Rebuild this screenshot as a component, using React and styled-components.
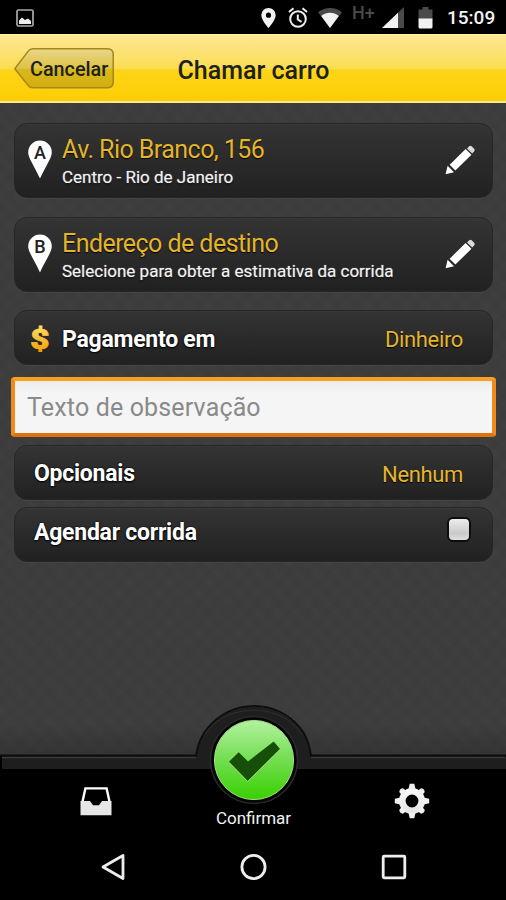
import styled, { createGlobalStyle } from "styled-components";

export default function App() {
  return (
    <Screen>
      <GlobalStyle />
      <StatusBar />
      <Header>
        <BackButton>
          <BackShape />
          <span>Cancelar</span>
        </BackButton>
        <Title>Chamar carro</Title>
      </Header>

      <Content>
        {addresses.map(({ letter, title, text, gap }) => (
          <Card key={letter} $tall $gap={gap}>
            <Pin letter={letter} />
            <Address>
              <AddressTitle>{title}</AddressTitle>
              <AddressText>{text}</AddressText>
            </Address>
            <Pencil />
          </Card>
        ))}
        <Card $gap={12} $left={13}>
          <Dollar />
          <Label $down={4}>Pagamento em</Label>
          <Value>Dinheiro</Value>
        </Card>
        <Input placeholder="Texto de observação" />
        <Card $gap={7} $left={19}>
          <Label $down={3}>Opcionais</Label>
          <Value>Nenhum</Value>
        </Card>
        <Card $gap={0} $left={19}>
          <Label $up={4}>Agendar corrida</Label>
          <Check />
        </Card>
      </Content>

      <Footer>
        <Dome />
        <Tab>
          <Inbox />
        </Tab>
        <Confirm>Confirmar</Confirm>
        <Tab>
          <Gear />
        </Tab>
      </Footer>
      <AndroidNav>
        <svg width="26" height="30" viewBox="0 0 26 30">
          <path d="M2 15 L22 3.5 V26.5 Z" fill="none" stroke="#eee" strokeWidth="2.8" strokeLinejoin="round" />
        </svg>
        <svg width="28" height="30" viewBox="0 0 28 30">
          <circle cx="13.5" cy="15" r="11.6" fill="none" stroke="#eee" strokeWidth="2.8" />
        </svg>
        <svg width="26" height="30" viewBox="0 0 26 30">
          <rect x="2.2" y="4.2" width="21.6" height="21.6" rx="1" fill="none" stroke="#eee" strokeWidth="2.8" />
        </svg>
      </AndroidNav>
    </Screen>
  );
}

const addresses = [
  { letter: "A", title: "Av. Rio Branco, 156", text: "Centro - Rio de Janeiro", gap: 19 },
  { letter: "B", title: "Endereço de destino", text: "Selecione para obter a estimativa da corrida", gap: 18 },
];

function StatusBar() {
  return (
    <Status>
      <svg width="18" height="18" viewBox="0 0 18 18">
        <rect x="1" y="1" width="16" height="16" rx="1.5" fill="none" stroke="#aaa" strokeWidth="1.7" />
        <path d="M3 15 V11.5 L6 8.5 L9 11 L12 9.5 L15 12 V15 Z" fill="#eee" />
      </svg>
      <StatusIcons>
        <svg width="15" height="20" viewBox="0 0 15 20">
          <path
            fillRule="evenodd"
            d="M7.5 0 A7.2 7.2 0 0 1 14.7 7.2 C14.7 12 7.5 20 7.5 20 S0.3 12 0.3 7.2 A7.2 7.2 0 0 1 7.5 0 Z M7.5 4.6 A2.6 2.6 0 1 0 7.5 9.8 A2.6 2.6 0 1 0 7.5 4.6 Z"
            fill="#f2f2f2"
          />
        </svg>
        <StatusIcon $left={12} width="20" height="21" viewBox="0 0 20 21">
          <g fill="none" stroke="#eee" strokeWidth="2">
            <circle cx="10" cy="12" r="7.8" />
            <path d="M1 5 L5.5 1.2 M19 5 L14.5 1.2 M9.8 7.5 V12.5 L13.5 14.8" />
          </g>
        </StatusIcon>
        <StatusIcon $left={10} width="24" height="20" viewBox="0 0 24 20">
          <path d="M0 4.3 C7 -1.4 17 -1.4 24 4.3 L12 20 Z" fill="#4a4a4a" />
          <path d="M3.2 8 C8.5 3.8 15.5 3.8 20.8 8 L12 20 Z" fill="#f2f2f2" />
        </StatusIcon>
        <Network>H+</Network>
        <StatusIcon $left={6} width="22" height="21" viewBox="0 0 22 21">
          <path d="M22 0 V21 H0 Z" fill="#4a4a4a" />
          <path d="M16 5.7 V21 H0 Z" fill="#f2f2f2" />
        </StatusIcon>
        <StatusIcon $left={14} width="15" height="22" viewBox="0 0 15 22">
          <path d="M4.5 0 H10.5 V2.4 H14.5 V12 H0.5 V2.4 H4.5 Z" fill="#4a4a4a" />
          <path d="M0.5 11.5 H14.5 V20 Q14.5 21.5 13 21.5 H2 Q0.5 21.5 0.5 20 Z" fill="#f2f2f2" />
        </StatusIcon>
        <Clock>15:09</Clock>
      </StatusIcons>
    </Status>
  );
}

function BackShape() {
  return (
    <svg width="101" height="42" viewBox="0 0 101 42">
      <defs>
        <linearGradient id="back" x1="0" y1="0" x2="0" y2="1">
          <stop offset="0" stopColor="#e9d68b" />
          <stop offset="0.5" stopColor="#dec344" />
          <stop offset="0.52" stopColor="#d9b81e" />
          <stop offset="1" stopColor="#d2ad0e" />
        </linearGradient>
      </defs>
      <path
        d="M1.8 20.7 L15 3.4 Q17 0.8 20 0.8 H94.5 Q100.2 0.8 100.2 6.6 V34.1 Q100.2 39.8 94.5 39.8 H20 Q17 39.8 15 37.4 Z"
        fill="url(#back)"
        stroke="#a5871a"
        strokeWidth="1.5"
      />
    </svg>
  );
}

function Pin({ letter }) {
  return (
    <PinSvg width="26" height="42" viewBox="0 0 26 42">
      <path
        d="M13 2.6 A11.8 11.8 0 0 1 24.8 14.4 C24.8 20 19 27 13 40.6 C7 27 1.2 20 1.2 14.4 A11.8 11.8 0 0 1 13 2.6 Z"
        fill="#fff"
      />
      <PinLetter x="13" y="20.6" textAnchor="middle">
        {letter}
      </PinLetter>
    </PinSvg>
  );
}

function Pencil() {
  return (
    <PencilSvg width="30" height="30" viewBox="0 0 30 30">
      <path d="M0.6 29.2 L2.6 20.8 L9 27.2 Z" fill="#fff" />
      <path d="M7.4 19.8 L20.6 6.8 L23.6 9.8 L10.4 22.8 Z" fill="#fff" stroke="#fff" strokeWidth="4" />
      <path d="M22 3.4 L24.2 1.2 Q25.4 0.2 26.6 1.3 L29.1 3.8 Q30.2 5 29.2 6.2 L27.2 8.4 Z" fill="#dcdcdc" />
    </PencilSvg>
  );
}

function Dollar() {
  return (
    <svg width="24" height="34" viewBox="0 0 24 34">
      <defs>
        <linearGradient id="gold" x1="0" y1="0" x2="0" y2="1">
          <stop offset="0.1" stopColor="#ffdc66" />
          <stop offset="0.9" stopColor="#f5a000" />
        </linearGradient>
      </defs>
      <DollarText x="10" y="27.8" textAnchor="middle" transform="scale(1.18 1)" fill="url(#gold)" stroke="url(#gold)">
        $
      </DollarText>
    </svg>
  );
}

function Dome() {
  return (
    <DomeSvg width="506" height="104" viewBox="0 0 506 104">
      <defs>
        <linearGradient id="green" x1="0" y1="0" x2="0" y2="1">
          <stop offset="0" stopColor="#b2f2a0" />
          <stop offset="0.45" stopColor="#79df58" />
          <stop offset="1" stopColor="#38d000" />
        </linearGradient>
      </defs>
      <path
        d="M2 54.5 H196 C198 41 202 33 208.5 26 A59.5 59.5 0 0 1 299.5 26 C306 33 309 41 311 54.5 H506 V67 H2 Z"
        fill="#1e1e1e"
      />
      <path
        d="M0 53.5 H196 C198 40 202 32 208.5 25 A59.5 59.5 0 0 1 299.5 25 C306 32 309 40 311 53.5 H506"
        fill="none"
        stroke="#0c0c0c"
        strokeWidth="1.8"
      />
      <path d="M2 55.5 H196 M311 55.5 H505" stroke="#3b3b3b" strokeWidth="1.6" />
      <path d="M205 33 C224 0 283 0 302 33" fill="none" stroke="#303030" strokeWidth="1" />
      <circle cx="254" cy="58" r="43.5" fill="#050505" stroke="#292929" strokeWidth="1.6" />
      <circle cx="254" cy="58" r="39.6" fill="url(#green)" stroke="#a4dd86" strokeWidth="1" />
      <path d="M229 59.8 L238.7 50.3 L248 59.4 L273.7 39.4 L280 47 L247.7 79 Z" fill="#174e08" />
      <path d="M229 60.6 L247.7 79.6 L280 47.6" fill="none" stroke="#97d97d" strokeWidth="1" />
    </DomeSvg>
  );
}

function Inbox() {
  return (
    <svg width="32" height="30" viewBox="0 0 32 30">
      <path d="M2.4 16 L5.4 2.4 H26.6 L29.6 16" fill="none" stroke="#fff" strokeWidth="2.4" />
      <path d="M0.5 15 H10 L13 19.3 H19 L22 15 H31.5 V29.3 H0.5 Z" fill="#e6e6e6" />
    </svg>
  );
}

function Gear() {
  const teeth = [0, 45, 90, 135, 180, 225, 270, 315];
  return (
    <GearSvg width="36" height="36" viewBox="-18 -18 36 36">
      <defs>
        <linearGradient id="steel" gradientUnits="userSpaceOnUse" x1="0" y1="-17" x2="0" y2="17">
          <stop offset="0" stopColor="#fff" />
          <stop offset="1" stopColor="#dedede" />
        </linearGradient>
      </defs>
      <circle r="9.7" fill="none" stroke="url(#steel)" strokeWidth="6.6" />
      {teeth.map((deg) => (
        <path
          key={deg}
          d={deg % 90 ? "M-3.2 -11 L-2.6 -15.4 Q0 -17.6 2.6 -15.4 L3.2 -11 Z" : "M-3.6 -11.5 L-2.3 -17.2 H2.3 L3.6 -11.5 Z"}
          fill="#f0f0f0"
          transform={`rotate(${deg})`}
        />
      ))}
    </GearSvg>
  );
}

// styles
const GlobalStyle = createGlobalStyle`
  * {
    box-sizing: border-box;
  }
  body {
    margin: 0;
    background: #000;
    font-family: Roboto, "Noto Sans", sans-serif;
  }
  svg {
    display: block;
    flex-shrink: 0;
  }
`;
const Screen = styled.div`
  width: 506px;
  height: 900px;
  display: flex;
  flex-direction: column;
  overflow: hidden;
  background: #000;
`;
const Status = styled.div`
  height: 34px;
  flex-shrink: 0;
  display: flex;
  align-items: center;
  justify-content: space-between;
  padding: 1px 10px 0 16px;
`;
const StatusIcons = styled.div`
  display: flex;
  align-items: center;
`;
const StatusIcon = styled.svg`
  margin-left: ${(props) => props.$left}px;
`;
const Network = styled.span`
  width: 24px;
  margin-left: 10px;
  margin-bottom: 9px;
  color: #4a4a4a;
  font-size: 18px;
  line-height: 18px;
  font-weight: 500;
`;
const Clock = styled.span`
  width: 49px;
  margin-left: 14px;
  color: #f2f2f2;
  font-size: 19px;
  line-height: 22px;
  font-weight: 500;
`;
const Header = styled.header`
  height: 69px;
  flex-shrink: 0;
  display: grid;
  grid-template-columns: 101px 1fr 101px;
  align-items: center;
  padding: 1px 13px 0;
  background: linear-gradient(#fde795 0%, #fbdd52 51%, #fdd419 53%, #fdce04 100%);
  border-top: 1px solid #fff3a8;
  border-bottom: 2px solid #fbe88c;
  color: #1c2120;
`;
const BackButton = styled.div`
  display: grid;
  align-items: center;
  svg,
  span {
    grid-area: 1 / 1;
  }
  span {
    padding: 2px 0 0 17px;
    font-size: 19.8px;
    line-height: 24px;
    font-weight: 500;
  }
`;
const Title = styled.h1`
  margin: 4px 0 0 1px;
  text-align: center;
  font-size: 25px;
  line-height: 30px;
  font-weight: 500;
`;
const Content = styled.main`
  height: 652px;
  flex-shrink: 0;
  display: flex;
  flex-direction: column;
  padding: 20px 13px 0 14px;
  background:
    linear-gradient(transparent 620px, rgba(0, 0, 0, 0.16)),
    repeating-linear-gradient(45deg, rgba(255, 255, 255, 0.008) 0 6px, transparent 6px 14px),
    repeating-linear-gradient(-45deg, rgba(0, 0, 0, 0.018) 0 6px, transparent 6px 14px),
    #3d3d3d;
`;
const Card = styled.section`
  height: ${(props) => (props.$tall ? 75 : 55)}px;
  flex-shrink: 0;
  display: flex;
  align-items: center;
  margin-bottom: ${(props) => props.$gap}px;
  padding: 0 ${(props) => (props.$tall ? 17 : 29)}px 0 ${(props) => props.$left || 12}px;
  background: linear-gradient(#343434, #212121);
  border: 1px solid #262626;
  border-radius: 13px;
  box-shadow: inset 0 1px 0 #383838, 0 1px 0 #444;
`;
const Address = styled.div`
  flex: 1;
  padding: 4px 0 0 9px;
  white-space: nowrap;
`;
const AddressTitle = styled.div`
  color: #e5b52c;
  font-size: 25px;
  line-height: 28px;
  letter-spacing: -0.55px;
  text-shadow: 0 1px 1px #000;
`;
const AddressText = styled.div`
  color: #f2f2f2;
  font-size: 17px;
  line-height: 26px;
  text-shadow: 0 1px 2px #000, 0 0 1px #f2f2f2;
`;
const PinSvg = styled.svg`
  margin-bottom: 4px;
`;
const PinLetter = styled.text`
  font-size: 18px;
  font-weight: 500;
  fill: #222;
`;
const PencilSvg = styled.svg`
  margin-bottom: 1px;
`;
const DollarText = styled.text`
  font-size: 28px;
  font-weight: 900;
  stroke-width: 0.8;
`;
const Label = styled.span`
  flex: 1;
  padding: ${(props) => props.$down || 0}px 0 ${(props) => props.$up || 0}px;
  color: #fff;
  font-size: 23px;
  line-height: 28px;
  font-weight: 700;
  letter-spacing: -0.25px;
  text-shadow: 0 1px 2px #000, 0 0 2px #000;
  svg + & {
    padding-left: 10px;
  }
`;
const Value = styled.span`
  padding-top: 4px;
  color: #e5b52c;
  font-size: 22px;
  line-height: 28px;
  letter-spacing: -0.35px;
  text-shadow: 0 1px 1px #000;
`;
const Input = styled.input`
  height: 60px;
  flex-shrink: 0;
  margin: 0 -3px 8px -3px;
  padding: 0 12px;
  border: 4px solid;
  border-color: #fa9f1e #f08a1b #e0720d #f08a1b;
  border-radius: 4px;
  background: linear-gradient(#ececec, #f5f5f5 12px);
  font-family: inherit;
  font-size: 25px;
  letter-spacing: 0.15px;
  outline: none;
  &::placeholder {
    color: #8a8a8a;
    opacity: 1;
  }
`;
const Check = styled.span`
  width: 24px;
  height: 25px;
  margin: 0 -8px 10px 0;
  border: 2px solid #0d0d0d;
  border-radius: 6px;
  background: linear-gradient(#ededed, #c9c9c9 70%, #e0e0e0);
`;
const Footer = styled.nav`
  position: relative;
  height: 82px;
  flex-shrink: 0;
  display: grid;
  grid-template-columns: 191px 125px 190px;
`;
const DomeSvg = styled.svg`
  position: absolute;
  left: 0;
  top: -53px;
`;
const Tab = styled.div`
  display: flex;
  justify-content: center;
  align-items: center;
  padding-top: 10px;
`;
const GearSvg = styled.svg`
  margin-left: 2px;
`;
const Confirm = styled.div`
  align-self: end;
  padding-bottom: 8px;
  text-align: center;
  color: #f2f2f2;
  font-size: 17px;
  line-height: 22px;
`;
const AndroidNav = styled.div`
  height: 58px;
  flex-shrink: 0;
  display: flex;
  justify-content: space-between;
  align-items: center;
  padding: 1px 99px 0 101px;
`;
